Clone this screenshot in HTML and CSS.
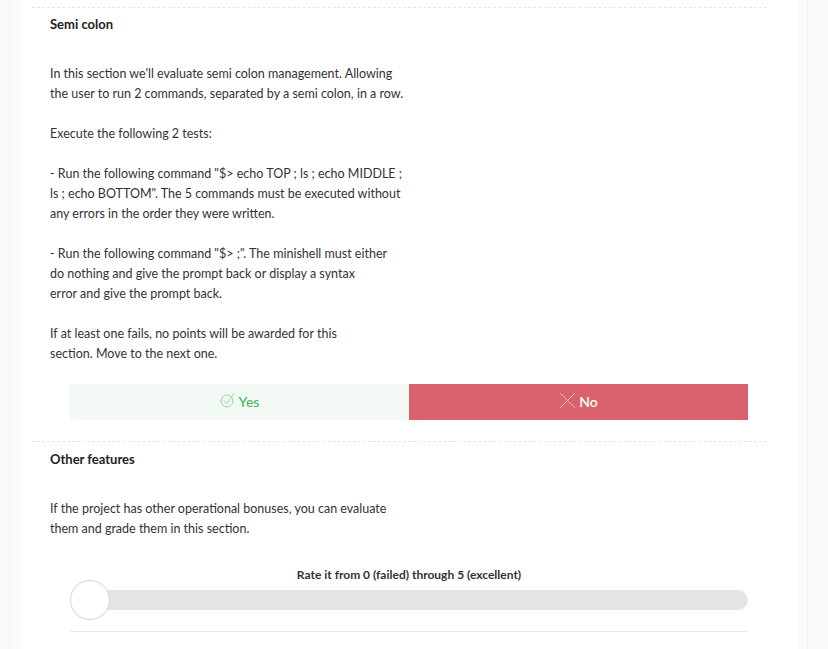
FILE: index.html
```html
<!DOCTYPE html>
<html>
<head>
<meta charset="utf-8">
<link rel="stylesheet" href="styles.css">
</head>
<body>
<div class="frame">
  <div class="card">
    <section class="section">
      <h3 class="title">Semi colon</h3>
      <p class="desc">In this section we'll evaluate semi colon management. Allowing<br>the user to run 2 commands, separated by a semi colon, in a row.<br><br>Execute the following 2 tests:<br><br>- Run the following command "$&gt; echo TOP ; ls ; echo MIDDLE ;<br>ls ; echo BOTTOM". The 5 commands must be executed without<br>any errors in the order they were written.<br><br>- Run the following command "$&gt; ;". The minishell must either<br>do nothing and give the prompt back or display a syntax<br>error and give the prompt back.<br><br>If at least one fails, no points will be awarded for this<br>section. Move to the next one.</p>
      <div class="choices">
        <div class="choice yes">
          <svg class="ico" width="16" height="16" viewBox="0 0 16 16" fill="none">
            <circle cx="7" cy="9" r="6" stroke="#8fd29e" stroke-width="0.9"/>
            <path d="M4 8.5 L6.8 11.5 L14.5 1" stroke="#8fd29e" stroke-width="0.9"/>
          </svg>
          <span>Yes</span>
        </div>
        <div class="choice no">
          <svg class="ico" width="17" height="17" viewBox="0 0 17 17" fill="none">
            <path d="M1 1 L16 16 M16 1 L1 16" stroke="#f2b8bf" stroke-width="1"/>
          </svg>
          <span>No</span>
        </div>
      </div>
    </section>
    <section class="section">
      <h3 class="title title-2">Other features</h3>
      <p class="desc desc-2">If the project has other operational bonuses, you can evaluate<br>them and grade them in this section.</p>
      <div class="rating">
        <div class="rate-label">Rate it from 0 (failed) through 5 (excellent)</div>
        <div class="slider">
          <div class="track"></div>
          <div class="knob"></div>
        </div>
      </div>
    </section>
  </div>
</div>
</body>
</html>
```
FILE: styles.css
```css
html, body {
  margin: 0;
  padding: 0;
  background: #f9f9f9;
  font-family: Lato, "Noto Sans", sans-serif;
  color: #333;
}
.frame {
  margin: 0 20px 0 10px;
  border-left: 1px solid #f1f1f1;
  border-right: 1px solid #f1f1f1;
  background: #fafafa;
  padding: 0 9px;
  min-height: 649px;
}
.card {
  background: #fff;
  padding: 7px 31px 0 12px;
  min-height: 642px;
}
.section {
  border-top: 1px dashed #e6e6e6;
}
.title {
  margin: 0;
  padding: 6px 0 0 18px;
  font-size: 13px;
  line-height: 20px;
  font-weight: 700;
  color: #222;
}
.title-2 {
  padding-top: 7px;
}
.desc {
  margin: 30px 0 0 18px;
  font-size: 12.5px;
  line-height: 20px;
  color: #333;
}
.desc-2 {
  margin-top: 30px;
}
.choices {
  display: flex;
  margin: 20px 19px 21px 38px;
  height: 36px;
}
.choice {
  flex: 1;
  display: flex;
  align-items: center;
  justify-content: center;
  gap: 3px;
  font-size: 14px;
  font-weight: 500;
  padding-bottom: 2px;
}
.choice.yes {
  background: #f3f9f5;
  color: #4cb863;
}
.choice.no {
  background: #da616e;
  color: #fff;
  font-weight: 600;
}
.ico {
  display: block;
  margin-top: -2px;
}
.rating {
  margin: 29px 19px 0 38px;
  padding-bottom: 11px;
  border-bottom: 1px solid #e9e9e9;
}
.rate-label {
  text-align: center;
  font-size: 12px;
  font-weight: 700;
  line-height: 14px;
  color: #333;
}
.slider {
  position: relative;
  height: 40px;
  margin-top: -2px;
  display: flex;
  align-items: center;
}
.track {
  flex: 1;
  height: 20px;
  border-radius: 10px;
  background: #e5e5e5;
}
.knob {
  position: absolute;
  left: 0;
  top: 0;
  width: 38px;
  height: 38px;
  border-radius: 50%;
  background: #fff;
  border: 1px solid #d3d3d3;
}
```
